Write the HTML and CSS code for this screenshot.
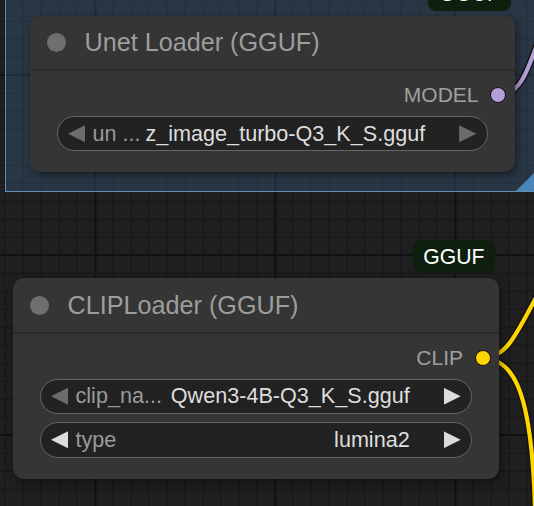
FILE: index.html
```html
<!DOCTYPE html>
<html lang="en">

<head>
    <meta charset="UTF-8" />
    <title>GGUF Loaders</title>
    <link rel="stylesheet" href="styles.css">
</head>

<body>
    <div class="canvas">
        <!-- group frame behind the unet loader -->
        <div class="group">
            <span class="group-handle"></span>
        </div>

        <!-- links are drawn under the nodes -->
        <svg class="links" width="534" height="506" viewBox="0 0 534 506">
            <path class="link-edge" d="M499 95 C518 95 526 78 542 30" />
            <path class="link link-model" d="M499 95 C518 95 526 78 542 30" />
            <path class="link-edge" d="M482 357 C505 357 512 345 545 280" />
            <path class="link link-clip" d="M482 357 C505 357 512 345 545 280" />
            <path class="link-edge" d="M482 358 C515 358 532 395 535 510" />
            <path class="link link-clip" d="M482 358 C515 358 532 395 535 510" />
        </svg>

        <div class="node node-unet">
            <div class="badge">GGUF</div>
            <div class="node-title">
                <span class="title-dot"></span>
                <span class="title-text">Unet Loader (GGUF)</span>
            </div>
            <div class="node-body">
                <div class="slot-row">
                    <span class="slot-label">MODEL</span>
                    <span class="slot-dot slot-model"></span>
                </div>
                <div class="widgets">
                    <div class="combo">
                        <span class="arrow arrow-left is-off"></span>
                        <span class="combo-label">un ...</span>
                        <span class="combo-value">z_image_turbo-Q3_K_S.gguf</span>
                        <span class="arrow arrow-right is-off"></span>
                    </div>
                </div>
            </div>
        </div>

        <div class="node node-clip">
            <div class="badge">GGUF</div>
            <div class="node-title">
                <span class="title-dot"></span>
                <span class="title-text">CLIPLoader (GGUF)</span>
            </div>
            <div class="node-body">
                <div class="slot-row">
                    <span class="slot-label">CLIP</span>
                    <span class="slot-dot slot-clip"></span>
                </div>
                <div class="widgets">
                    <div class="combo">
                        <span class="arrow arrow-left is-off"></span>
                        <span class="combo-label">clip_na...</span>
                        <span class="combo-value">Qwen3-4B-Q3_K_S.gguf</span>
                        <span class="arrow arrow-right"></span>
                    </div>
                    <div class="combo">
                        <span class="arrow arrow-left"></span>
                        <span class="combo-label">type</span>
                        <span class="combo-value">lumina2</span>
                        <span class="arrow arrow-right"></span>
                    </div>
                </div>
            </div>
        </div>
    </div>
</body>

</html>
```

FILE: styles.css
```css
* {
    margin: 0;
    padding: 0;
    box-sizing: border-box;
}

body {
    width: 534px;
    height: 506px;
    overflow: hidden;
    font-family: "Liberation Sans", Arial, sans-serif;
    background-color: #1f1f1f;
    background-image:
        linear-gradient(to right, #111 0 2px, transparent 2px),
        linear-gradient(to bottom, #111 0 2px, transparent 2px),
        linear-gradient(to right, #161616 0 1px, transparent 1px),
        linear-gradient(to bottom, #161616 0 1px, transparent 1px);
    background-size: 180px 180px, 180px 180px, 18px 18px, 18px 18px;
    background-position: 94.5px 0, 0 74px, 4.6px 0, 0 2.8px;
}

.canvas {
    position: relative;
    width: 534px;
    height: 506px;
    overflow: hidden;
}

/* group */
.group {
    position: absolute;
    left: 5px;
    top: -20px;
    width: 531px;
    height: 212px;
    border: 1.5px solid #5e8fb8;
    background: rgba(70, 120, 170, 0.28);
}

.group-handle {
    position: absolute;
    right: 0;
    bottom: 0;
    width: 19px;
    height: 19px;
    background: #4a86b8;
    clip-path: polygon(100% 0, 100% 100%, 0 100%);
}

/* links */
.links {
    position: absolute;
    left: 0;
    top: 0;
    fill: none;
}

.link-edge {
    stroke: #141414;
    stroke-width: 7;
}

.link {
    stroke-width: 4.2;
}

.link-model {
    stroke: #b39ddb;
}

.link-clip {
    stroke: #ffd500;
}

/* nodes */
.node {
    position: absolute;
    background: #353535;
    border-radius: 11px;
    box-shadow: 2px 3px 8px rgba(0, 0, 0, 0.45);
}

.node-unet {
    left: 30px;
    top: 15.7px;
    width: 484.5px;
}

.node-clip {
    left: 13px;
    top: 278.3px;
    width: 486px;
}

.badge {
    position: absolute;
    right: 4px;
    bottom: calc(100% + 5px);
    height: 33.5px;
    padding: 0 10.5px;
    line-height: 33.5px;
    font-size: 21.2px;
    color: #fff;
    background: #0e1f0e;
    border-radius: 8px;
}

.node-title {
    display: flex;
    align-items: center;
    height: 55.5px;
    padding-left: 17.4px;
    border-bottom: 2px solid #2b2b2b;
}

.title-dot {
    flex: none;
    width: 19px;
    height: 19px;
    margin-right: 18.1px;
    border-radius: 50%;
    background: #6f6f6f;
}

.title-text {
    font-size: 25.2px;
    color: #9d9d9d;
}

.node-body {
    padding: 6.3px 0 21px;
}

.slot-row {
    display: flex;
    justify-content: flex-end;
    align-items: center;
    height: 35px;
    padding-right: 8.5px;
}

.slot-label {
    margin-right: 11.5px;
    font-size: 21px;
    color: #a0a0a0;
}

.slot-dot {
    flex: none;
    width: 16px;
    height: 16px;
    border-radius: 50%;
    border: 1.6px solid #121212;
}

.slot-model {
    background: #b39ddb;
}

.slot-clip {
    background: #ffd500;
}

/* combo widgets */
.widgets {
    display: flex;
    flex-direction: column;
    gap: 8px;
    margin-top: 3.5px;
    padding: 0 26.8px 0 26.5px;
}

.combo {
    display: flex;
    align-items: center;
    height: 35.5px;
    padding: 0 10.5px;
    font-size: 21.6px;
    background: #222;
    border: 1.5px solid #666;
    border-radius: 18px;
}

.arrow {
    flex: none;
    width: 17px;
    height: 17px;
    background: #dcdcdc;
}

.arrow.is-off {
    background: #6c6c6c;
}

.arrow-left {
    margin-right: 7.5px;
    clip-path: polygon(100% 0, 0 50%, 100% 100%);
}

.arrow-right {
    margin-left: 34px;
    clip-path: polygon(0 0, 100% 50%, 0 100%);
}

.combo-label {
    white-space: nowrap;
    color: #9a9a9a;
}

.combo-value {
    margin-left: auto;
    white-space: nowrap;
    color: #dedede;
}
```
